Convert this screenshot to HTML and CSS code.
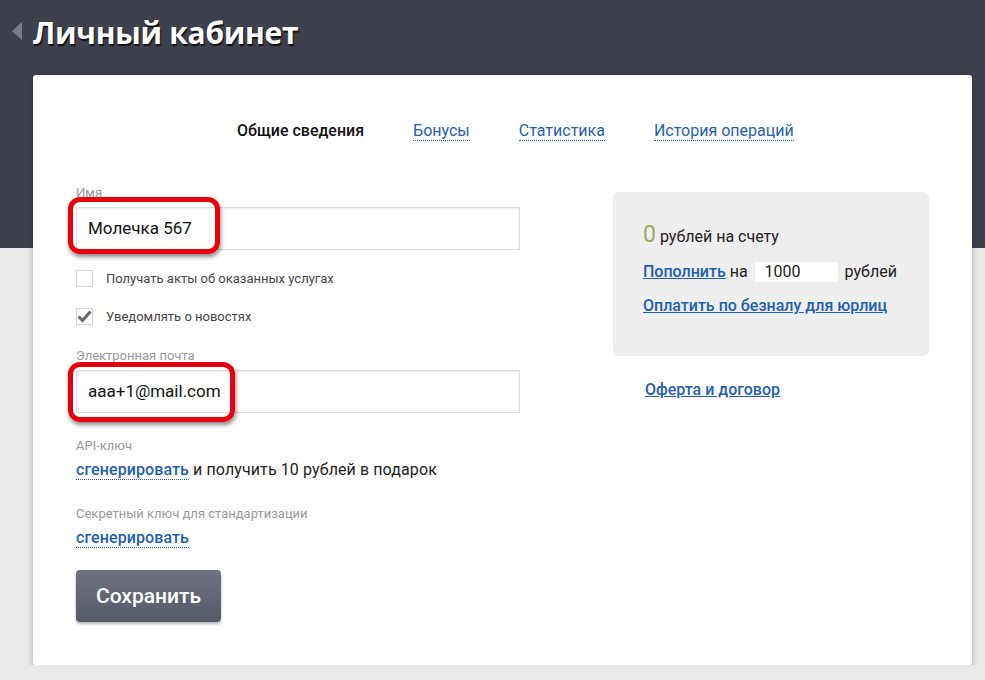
FILE: index.html
```html
<!DOCTYPE html>
<html lang="ru">
<head>
  <meta charset="UTF-8" />
  <title>Личный кабинет</title>
  <link rel="stylesheet" href="styles.css">
</head>
<body>
  <div class="top-band"></div>

  <div class="page">
    <h1 class="page-title"><span class="back"></span>Личный кабинет</h1>

    <div class="card">
      <nav class="tabs">
        <span class="tab current">Общие сведения</span>
        <a class="tab">Бонусы</a>
        <a class="tab">Статистика</a>
        <a class="tab">История операций</a>
      </nav>

      <div class="columns">
        <div class="profile">
          <div class="field">
            <label class="field-label">Имя</label>
            <div class="input-wrap">
              <div class="input">Молечка 567</div>
              <span class="mark mark-name"></span>
            </div>
          </div>

          <div class="check">
            <span class="box"></span>
            <span>Получать акты об оказанных услугах</span>
          </div>
          <div class="check">
            <span class="box">
              <svg width="15" height="13" viewBox="0 0 15 13"><path d="M1.5 6.5 L5.5 10.5 L13.5 1.5" fill="none" stroke="#666" stroke-width="3"/></svg>
            </span>
            <span>Уведомлять о новостях</span>
          </div>

          <div class="field email">
            <label class="field-label">Электронная почта</label>
            <div class="input-wrap">
              <div class="input">aaa+1@mail.com</div>
              <span class="mark mark-email"></span>
            </div>
          </div>

          <div class="key">
            <div class="field-label">API-ключ</div>
            <p><a class="dotted">сгенерировать</a> и получить 10 рублей в подарок</p>
          </div>

          <div class="key">
            <div class="field-label">Секретный ключ для стандартизации</div>
            <p><a class="dotted">сгенерировать</a></p>
          </div>

          <button class="save">Сохранить</button>
        </div>

        <div class="side">
          <div class="balance">
            <p class="amount"><span class="zero">0</span> рублей на счету</p>
            <p class="refill"><a class="ul">Пополнить</a> на <span class="sum">1000</span> рублей</p>
            <p class="cashless"><a class="ul">Оплатить по безналу для юрлиц</a></p>
          </div>
          <a class="ul offer">Оферта и договор</a>
        </div>
      </div>
    </div>
  </div>
</body>
</html>
```

FILE: styles.css
```css
* {
  box-sizing: border-box;
}

body {
  margin: 0;
  font-family: Roboto, 'Liberation Sans', sans-serif;
  color: #222;
  background: #e9e9e9;
}

.top-band {
  position: absolute;
  top: 0;
  left: 0;
  right: 0;
  height: 248px;
  background: #3e404b;
}

.page {
  position: relative;
  padding: 0 13px 0 33px;
}

.page-title {
  margin: 0;
  height: 75px;
  padding-top: 12px;
  font-family: 'Open Sans', sans-serif;
  font-size: 30px;
  font-weight: 700;
  letter-spacing: -0.3px;
  color: #fff;
  text-shadow: 1px 2px 1px #111;
  position: relative;
}

.back {
  position: absolute;
  left: -21px;
  top: 22px;
  width: 0;
  height: 0;
  border-top: 9px solid transparent;
  border-bottom: 9px solid transparent;
  border-right: 10px solid #7a7d87;
}

.card {
  background: #fff;
  border-radius: 3px;
  box-shadow: 0 3px 6px rgba(0, 0, 0, 0.25);
  height: 590px;
  padding: 0 43px;
}

.tabs {
  display: flex;
  gap: 49px;
  padding: 46px 0 0 161px;
  height: 110px;
  font-size: 16px;
}

.tab {
  line-height: 20px;
}

.tab.current {
  font-weight: 500;
  color: #111;
}

a.tab {
  color: #1f5fb3;
  border-bottom: 1px dotted #1f5fb3;
  height: 20px;
}

.columns {
  display: flex;
  gap: 93px;
}

.profile {
  width: 444px;
}

.field-label {
  display: block;
  font-size: 13px;
  color: #999;
  line-height: 16px;
}

.input-wrap {
  position: relative;
  margin-top: 6px;
}

.input {
  height: 43px;
  border: 1px solid #dcdcdc;
  box-shadow: inset 0 1px 2px rgba(0, 0, 0, 0.08);
  padding: 0 11px;
  font-size: 17px;
  line-height: 41px;
  color: #111;
}

.mark {
  position: absolute;
  left: -8px;
  top: -10px;
  height: 57px;
  border: 5px solid #e8000b;
  border-radius: 12px;
  box-shadow: 1px 3px 4px rgba(0, 0, 0, 0.45);
}

.mark-name {
  width: 152px;
}

.mark-email {
  width: 167px;
  top: -8px;
  height: 60px;
}

.check {
  display: flex;
  align-items: center;
  gap: 13px;
  font-size: 13px;
  color: #444;
  margin-top: 20px;
}

.check + .check {
  margin-top: 21px;
}

.box {
  width: 17px;
  height: 17px;
  border: 1px solid #d6d6d6;
  display: flex;
  align-items: center;
  justify-content: center;
}

.email {
  margin-top: 23px;
}

.key {
  margin-top: 25px;
}

.key + .key {
  margin-top: 27px;
}

.key p {
  margin: 6px 0 0;
  font-size: 16px;
  letter-spacing: 0.1px;
  color: #222;
}

.dotted {
  color: #1f5fb3;
  font-weight: 500;
  border-bottom: 1px dotted #1f5fb3;
}

.save {
  margin-top: 23px;
  width: 145px;
  height: 52px;
  border: none;
  border-radius: 4px;
  background: linear-gradient(#6e737f, #555a66);
  box-shadow: 0 2px 3px rgba(0, 0, 0, 0.3);
  color: #fff;
  font-family: Roboto, sans-serif;
  font-size: 21px;
  font-weight: 500;
}

.side {
  width: 316px;
}

.balance {
  margin-top: 7px;
  height: 164px;
  background: #eee;
  border-radius: 6px;
  padding: 31px 30px;
  font-size: 16px;
}

.balance p {
  margin: 0;
  line-height: 24px;
}

.amount .zero {
  color: #96ad62;
  font-size: 23px;
}

.refill {
  margin-top: 11px !important;
}

.cashless {
  margin-top: 10px !important;
}

.sum {
  display: inline-block;
  background: #fff;
  width: 83px;
  height: 20px;
  line-height: 20px;
  padding-left: 10px;
  margin: 0 3px;
}

.ul {
  color: #1f5fb3;
  font-weight: 500;
  text-decoration: underline;
}

.offer {
  display: inline-block;
  margin: 24px 0 0 32px;
  font-size: 16px;
}
```
